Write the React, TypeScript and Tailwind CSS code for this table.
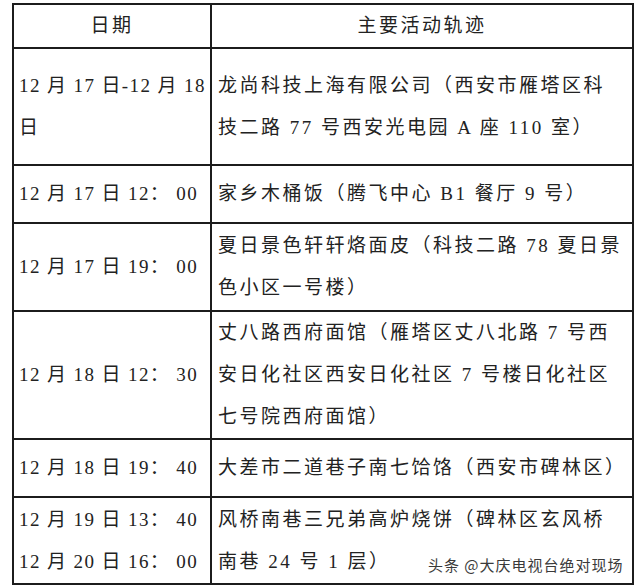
const rows: { date: string[]; place: string[]; h: string }[] = [
  {
    date: ["12 月 17 日-12 月 18", "日"],
    place: ["龙尚科技上海有限公司（西安市雁塔区科", "技二路 77 号西安光电园 A 座 110 室）"],
    h: "h-[117px]",
  },
  { date: ["12 月 17 日 12： 00"], place: ["家乡木桶饭（腾飞中心 B1 餐厅 9 号）"], h: "h-[58px]" },
  {
    date: ["12 月 17 日 19： 00"],
    place: ["夏日景色轩轩烙面皮（科技二路 78 夏日景", "色小区一号楼）"],
    h: "h-[88px]",
  },
  {
    date: ["12 月 18 日 12： 30"],
    place: ["丈八路西府面馆（雁塔区丈八北路 7 号西", "安日化社区西安日化社区 7 号楼日化社区", "七号院西府面馆）"],
    h: "h-[128px]",
  },
  { date: ["12 月 18 日 19： 40"], place: ["大差市二道巷子南七饸饹（西安市碑林区）"], h: "h-[58px]" },
  {
    date: ["12 月 19 日 13： 40", "12 月 20 日 16： 00"],
    place: ["风桥南巷三兄弟高炉烧饼（碑林区玄风桥", "南巷 24 号 1 层）"],
    h: "h-[87px]",
  },
];

export default function App() {
  return (
    <div className="w-[640px] h-[586px] bg-white pl-[12px] pt-[3px] relative overflow-hidden">
      <table className="table-fixed w-[620px] border-collapse text-[#222] text-[19px] leading-[42px] tracking-[2.5px] font-['Liberation_Serif','Noto_Sans_CJK_SC',serif]">
        <colgroup>
          <col className="w-[198px]" />
          <col className="w-[422px]" />
        </colgroup>
        <thead>
          <tr className="h-[43px]">
            <th className="border-2 border-[#1c1c1c] font-normal text-center">日期</th>
            <th className="border-2 border-[#1c1c1c] font-normal text-center">主要活动轨迹</th>
          </tr>
        </thead>
        <tbody>
          {rows.map((r, i) => (
            <tr key={i} className={r.h}>
              <td className="border-2 border-[#1c1c1c] pl-[5px] pr-0 align-middle whitespace-nowrap overflow-visible tracking-[1.4px]">
                {r.date.map((d, j) => (
                  <div key={j}>{d}</div>
                ))}
              </td>
              <td className="border-2 border-[#1c1c1c] pl-[6px] pr-0 align-middle whitespace-nowrap">
                {r.place.map((p, j) => (
                  <div key={j}>{p}</div>
                ))}
              </td>
            </tr>
          ))}
        </tbody>
      </table>
      <div className="absolute left-[428px] top-[555px] text-[15px] leading-[20px] tracking-[1px] text-[#3a3a3a] font-['Noto_Sans_CJK_SC',sans-serif] bg-white/70">
        头条 @大庆电视台绝对现场
      </div>
    </div>
  );
}
